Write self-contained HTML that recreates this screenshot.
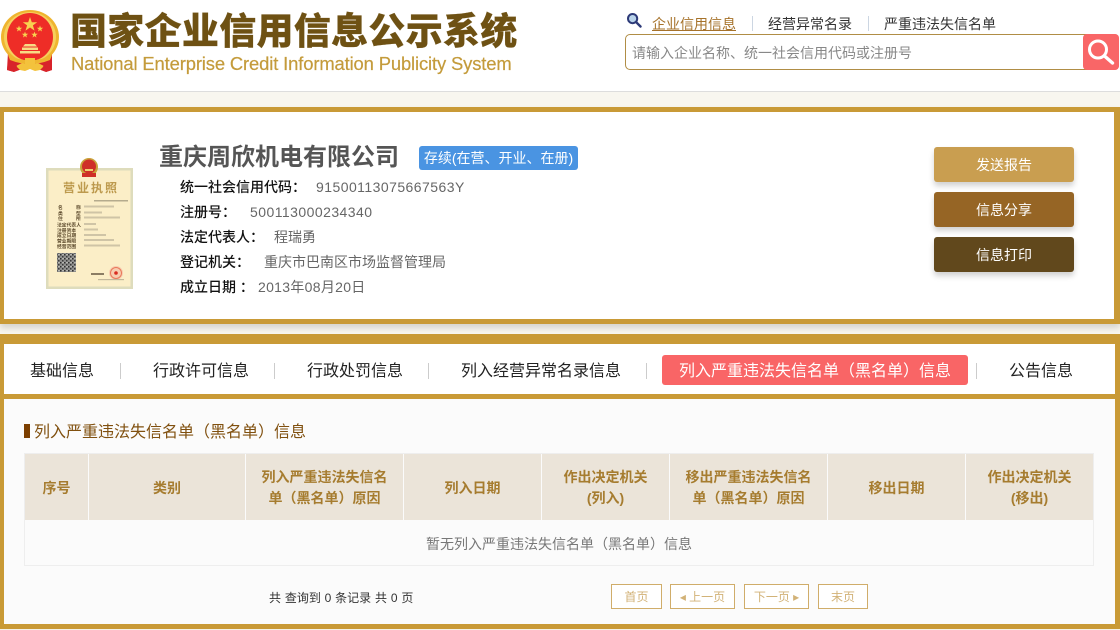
<!DOCTYPE html>
<html lang="zh-CN">
<head>
<meta charset="utf-8">
<title>国家企业信用信息公示系统</title>
<style>
html,body{margin:0;padding:0}
body{position:relative;width:1120px;height:630px;overflow:hidden;background:#f8f6ef;font-family:"Liberation Sans","Noto Sans CJK SC",sans-serif;color:#333}
.a{position:absolute}
.t{position:absolute;white-space:nowrap;line-height:20px;height:20px}
.sep{position:absolute;width:1px;background:#ccc}
.lab{font-size:14px;color:#111;font-weight:500;left:180px}
.val{font-size:14px;color:#666}
.btn{position:absolute;left:934px;width:140px;height:35px;border-radius:3px;color:#fff;font-size:14px;line-height:37px;text-align:center;box-shadow:0 4px 6px rgba(0,0,0,.18)}
.tab{font-size:16px;color:#222;top:362px}
.th{position:absolute;top:454px;height:66px;background:#ebe4d9;color:#a67c2f;font-size:14px;font-weight:700;line-height:21px;display:flex;align-items:center;justify-content:center;text-align:center;box-sizing:border-box;padding:2px 14px 0}
.pg{position:absolute;top:584px;height:25px;box-sizing:border-box;border:1px solid #d0ad6a;color:#d2b277;font-size:12px;line-height:25px;text-align:center;background:#fff}
</style>
</head>
<body>
<div class="a" style="left:0;top:0;width:1120px;height:91px;background:#fff;border-bottom:1px solid #ddd"></div>

<svg class="a" style="left:0;top:8px" width="62" height="68" viewBox="0 0 62 68">
<path d="M8 44 L7 62 L14 64 L22 61 L30 58 L38 61 L46 64 L52 62 L52 44Z" fill="#d8232a"/>
<ellipse cx="30" cy="29" rx="29" ry="27" fill="#efb52f"/>
<ellipse cx="30" cy="29" rx="26" ry="25" fill="#f6cf5c"/>
<ellipse cx="30" cy="29" rx="23" ry="24" fill="#ee2d27"/>
<polygon points="30,9 31.8,14.2 37.2,14.2 32.9,17.4 34.500,22.600 30,19.500 25.500,22.600 27.100,17.400 22.800,14.200 28.200,14.200" fill="#f8d24f"/>
<polygon points="19,17.5 19.8,19.8 22.2,19.8 20.3,21.2 21,23.5 19,22.1 17,23.5 17.7,21.2 15.8,19.8 18.2,19.8" fill="#f8d24f"/>
<polygon points="40,17.5 40.8,19.8 43.2,19.8 41.3,21.2 42,23.5 40,22.1 38,23.5 38.7,21.2 36.8,19.8 39.2,19.8" fill="#f8d24f"/>
<polygon points="25,23.5 25.8,25.8 28.2,25.8 26.3,27.2 27,29.5 25,28.1 23,29.5 23.7,27.2 21.8,25.8 24.2,25.8" fill="#f8d24f"/>
<polygon points="34.5,23.5 35.3,25.8 37.7,25.8 35.8,27.2 36.5,29.5 34.5,28.1 32.5,29.5 33.2,27.2 31.3,25.8 33.7,25.8" fill="#f8d24f"/>
<path d="M25 36h10l2 2.500H23zM22 39.500h16v2.500H22zM20 43h20v2.500H20z" fill="#f8dc84"/>
<path d="M8 47 Q30 58 52 47 L50 52 Q30 60 10 52Z" fill="#efb52f"/>
<path d="M16 58l6-3 8 2 8-2 6 3-4 4-5 1-5-2-5 2-5-1z" fill="#f3c23c"/>
<path d="M25 50h10v8H25z" fill="#f3c23c"/>
<path d="M8 53l9 5-3 6-7-2zM52 53l-9 5 3 6 6-2z" fill="#d8232a"/>
</svg>

<div class="t" style="left:70px;top:10px;height:44px;line-height:44px;font-size:37px;font-weight:900;color:#6e5113;letter-spacing:.3px;-webkit-text-stroke:.2px #6e5113">国家企业信用信息公示系统</div>
<div class="t" style="left:71px;top:52px;height:24px;line-height:24px;font-size:18.4px;color:#c49b3b;letter-spacing:-.13px;-webkit-text-stroke:.2px #c49b3b">National Enterprise Credit Information Publicity System</div>

<svg class="a" style="left:626px;top:12px" width="17" height="17" viewBox="0 0 17 17">
<circle cx="6.6" cy="6.6" r="4.6" fill="#b9d3ea" stroke="#2d3a78" stroke-width="2"/>
<path d="M10.2 10.2L14.5 14.5" stroke="#2d3a78" stroke-width="2.4" stroke-linecap="round"/>
</svg>
<div class="t" style="left:652px;top:14px;font-size:14px;color:#a6722a;text-decoration:underline">企业信用信息</div>
<div class="sep" style="left:752px;top:16px;height:15px;background:#ccd6e2"></div>
<div class="t" style="left:768px;top:14px;font-size:14px;color:#333">经营异常名录</div>
<div class="sep" style="left:868px;top:16px;height:15px;background:#ccd6e2"></div>
<div class="t" style="left:884px;top:14px;font-size:14px;color:#333">严重违法失信名单</div>

<div class="a" style="left:625px;top:34px;width:492px;height:34px;border:1px solid #b08d45;border-radius:5px;background:#fff"></div>
<div class="t" style="left:632px;top:43px;font-size:14px;color:#888">请输入企业名称、统一社会信用代码或注册号</div>
<div class="a" style="left:1083px;top:34px;width:36px;height:36px;background:#f96667;border-radius:4px"></div>
<svg class="a" style="left:1083px;top:34px" width="36" height="36" viewBox="0 0 36 36">
<circle cx="15" cy="15.500" r="8.500" fill="none" stroke="#fff" stroke-width="3"/>
<path d="M21.500 22L29.500 29" stroke="#fff" stroke-width="3.400" stroke-linecap="round"/>
</svg>

<!-- info panel -->
<div class="a" style="left:0;top:107px;width:1120px;height:217px;box-sizing:border-box;background:#fff;border:solid #c99a36;border-width:5px 6px 5px 4px;box-shadow:0 4px 6px rgba(0,0,0,.14)"></div>

<svg class="a" style="left:40px;top:150px" width="100" height="145" viewBox="0 0 100 145" font-family="'Liberation Sans','Noto Sans CJK SC',sans-serif">
<defs>
<pattern id="qr" width="4" height="4" patternUnits="userSpaceOnUse">
<rect width="4" height="4" fill="#8f8f8d"/>
<rect width="1.500" height="1.500" fill="#2f2f2f"/>
<rect x="2" y="2" width="1.500" height="1.500" fill="#3a3a3a"/>
<rect x="2.500" y="0" width="1" height="1" fill="#d8d8d4"/>
</pattern>
</defs>
<rect x="6" y="18" width="87" height="121" fill="#dedcbc"/>
<rect x="8.500" y="20.500" width="82" height="116" fill="#fbeec7"/>
<circle cx="49" cy="17" r="9" fill="#c9a23a"/>
<circle cx="49" cy="16.500" r="7" fill="#cf2f28"/>
<path d="M42 23h14v4H42z" fill="#cf2f28"/>
<path d="M45 19h8v2h-8z" fill="#f0cf70"/>
<text x="23" y="42" font-size="12" font-weight="700" fill="#bd9a4e" letter-spacing="2">营业执照</text>
<rect x="54" y="50" width="34" height="1.500" fill="#b5ab8d"/>
<g font-size="4.800" font-weight="700" fill="#5c4a2c">
<text x="18" y="59">名</text><text x="36" y="59">称</text>
<text x="18" y="65">类</text><text x="36" y="65">型</text>
<text x="18" y="70">住</text><text x="36" y="70">所</text>
<text x="17" y="76.500">法定代表人</text>
<text x="17" y="82">注册资本</text>
<text x="17" y="87">成立日期</text>
<text x="17" y="92.500">营业期限</text>
<text x="17" y="98">经营范围</text>
</g>
<g fill="#cfc4a6">
<rect x="44" y="55.500" width="30" height="2"/>
<rect x="44" y="61.500" width="18" height="2"/>
<rect x="44" y="66.500" width="36" height="2"/>
<rect x="44" y="73" width="12" height="2"/>
<rect x="44" y="78.500" width="14" height="2"/>
<rect x="44" y="84" width="22" height="2"/>
<rect x="44" y="89" width="30" height="2"/>
<rect x="44" y="94.500" width="36" height="2"/>
</g>
<rect x="17" y="103" width="19" height="19" fill="url(#qr)"/>
<circle cx="76" cy="123" r="7" fill="#f7cdb0"/>
<circle cx="76" cy="123" r="5.500" fill="none" stroke="#e9785a" stroke-width="1"/>
<circle cx="76" cy="123" r="1.800" fill="#d92b20"/>
<rect x="51" y="123" width="13" height="2" fill="#8b7d64"/>
<rect x="58" y="129" width="26" height="1.200" fill="#c3b89b"/>
</svg>

<div class="t" style="left:159px;top:141px;height:34px;line-height:34px;font-size:24px;font-weight:700;color:#555">重庆周欣机电有限公司</div>
<div class="a" style="left:419px;top:146px;width:159px;height:24px;background:#4a94e2;border-radius:3px;color:#fff;font-size:14px;line-height:24px;text-align:center;white-space:nowrap">存续(在营、开业、在册)</div>

<div class="t lab" style="top:177px">统一社会信用代码：</div>
<div class="t val" style="left:316px;top:177px;letter-spacing:.45px">91500113075667563Y</div>
<div class="t lab" style="top:202px">注册号：</div>
<div class="t val" style="left:250px;top:202px;letter-spacing:.45px">500113000234340</div>
<div class="t lab" style="top:227px">法定代表人：</div>
<div class="t val" style="left:274px;top:227px">程瑞勇</div>
<div class="t lab" style="top:252px">登记机关：</div>
<div class="t val" style="left:264px;top:252px">重庆市巴南区市场监督管理局</div>
<div class="t lab" style="top:277px">成立日期 ：</div>
<div class="t val" style="left:258px;top:277px;letter-spacing:.3px">2013年08月20日</div>

<div class="btn" style="top:147px;background:#c99e50">发送报告</div>
<div class="btn" style="top:192px;background:#966525">信息分享</div>
<div class="btn" style="top:237px;background:#61481c">信息打印</div>

<!-- lower frame -->
<div class="a" style="left:0;top:334px;width:1120px;height:296px;box-sizing:border-box;background:#c99a36"></div>
<div class="a" style="left:4px;top:344px;width:1111px;height:50px;background:#fff"></div>
<div class="a" style="left:4px;top:399px;width:1111px;height:225px;background:#fbfbfb"></div>
<div class="a" style="left:0;top:629px;width:1120px;height:1px;background:#f4f1e6"></div>

<div class="t tab" style="left:30px">基础信息</div>
<div class="sep" style="left:120px;top:363px;height:16px"></div>
<div class="t tab" style="left:153px">行政许可信息</div>
<div class="sep" style="left:274px;top:363px;height:16px"></div>
<div class="t tab" style="left:307px">行政处罚信息</div>
<div class="sep" style="left:428px;top:363px;height:16px"></div>
<div class="t tab" style="left:461px">列入经营异常名录信息</div>
<div class="sep" style="left:646px;top:363px;height:16px"></div>
<div class="a" style="left:662px;top:355px;width:306px;height:30px;background:#f96566;border-radius:3px"></div>
<div class="t tab" style="left:679px;color:#fff">列入严重违法失信名单（黑名单）信息</div>
<div class="sep" style="left:976px;top:363px;height:16px"></div>
<div class="t tab" style="left:1009px">公告信息</div>

<div class="a" style="left:24px;top:424px;width:6px;height:14px;background:#7c3f00"></div>
<div class="t" style="left:34px;top:423px;font-size:16px;color:#80500f">列入严重违法失信名单（黑名单）信息</div>

<div class="a" style="left:24px;top:453px;width:1070px;height:113px;box-sizing:border-box;border:1px solid #eee;background:#fbfbfb"></div>
<div class="th" style="left:25px;width:63px">序号</div>
<div class="th" style="left:89px;width:156px">类别</div>
<div class="th" style="left:246px;width:157px">列入严重违法失信名单（黑名单）原因</div>
<div class="th" style="left:404px;width:137px">列入日期</div>
<div class="th" style="left:542px;width:127px">作出决定机关<br>(列入)</div>
<div class="th" style="left:670px;width:157px">移出严重违法失信名单（黑名单）原因</div>
<div class="th" style="left:828px;width:137px">移出日期</div>
<div class="th" style="left:966px;width:127px">作出决定机关<br>(移出)</div>
<div class="t" style="left:426px;top:534px;font-size:14px;color:#777">暂无列入严重违法失信名单（黑名单）信息</div>

<div class="t" style="left:269px;top:588px;font-size:12px;color:#333;word-spacing:.5px">共 查询到 0 条记录 共 0 页</div>
<div class="pg" style="left:611px;width:51px">首页</div>
<div class="pg" style="left:670px;width:65px">◂ 上一页</div>
<div class="pg" style="left:744px;width:65px">下一页 ▸</div>
<div class="pg" style="left:818px;width:50px">末页</div>
</body>
</html>
